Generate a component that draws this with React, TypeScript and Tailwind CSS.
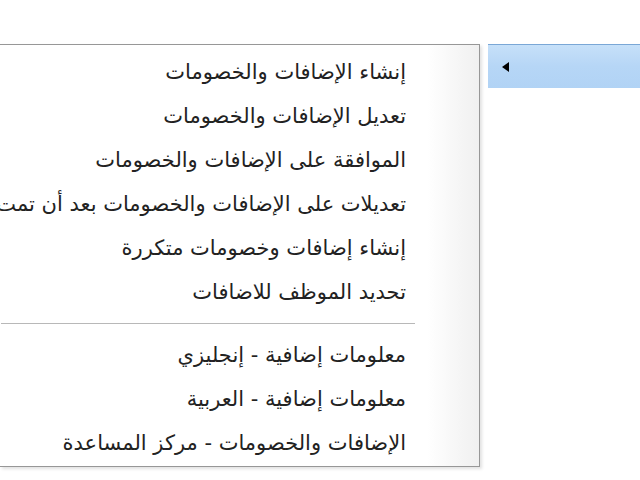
import React from "react";

const group1 = [
  "إنشاء الإضافات والخصومات",
  "تعديل الإضافات والخصومات",
  "الموافقة على الإضافات والخصومات",
  "تعديلات على الإضافات والخصومات بعد أن تمت الموافقة عليها",
  "إنشاء إضافات وخصومات متكررة",
  "تحديد الموظف للاضافات",
];
const group2 = [
  "معلومات إضافية - إنجليزي",
  "معلومات إضافية - العربية",
  "الإضافات والخصومات - مركز المساعدة",
];

function Row({ text }: { text: string }) {
  return (
    <div className="h-[44px] flex items-center pr-[73px] whitespace-nowrap text-[21px] leading-none text-[#222]">
      {text}
    </div>
  );
}

export default function App() {
  return (
    <div
      className="w-[640px] h-[480px] bg-white overflow-hidden pt-[44px] flex items-start"
      style={{ fontFamily: '"DejaVu Sans", sans-serif' }}
    >
      <div className="relative shrink-0 w-[480px] h-[423px] overflow-hidden border border-[#979797] border-l-0 bg-white shadow-[2px_2px_3px_rgba(0,0,0,0.12)]">
        <div className="absolute top-0 bottom-0 right-0 w-[52px] bg-gradient-to-l from-[#f0f0f0] to-white" />
        <div className="relative flex flex-col items-end pt-[5px]" dir="rtl">
          <div className="w-full flex flex-col">
            {group1.map((t) => (
              <Row key={t} text={t} />
            ))}
          </div>
          <div className="w-full h-[19px] flex items-center">
            <div className="w-[414px] h-[2px] border-t border-[#b8b8b8] border-b border-b-white mr-[64px]" />
          </div>
          <div className="w-full flex flex-col">
            {group2.map((t) => (
              <Row key={t} text={t} />
            ))}
          </div>
        </div>
      </div>
      <div className="ml-[8px] flex-1 h-[44px] border-t border-[#7aa7d6] bg-gradient-to-b from-[#c6e0f9] via-[#b6d6f6] to-[#b1d3f5] flex items-center pl-[14px]">
        <svg width="7" height="10" viewBox="0 0 7 10">
          <polygon points="7,0 7,10 0,5" fill="#000" />
        </svg>
      </div>
    </div>
  );
}
